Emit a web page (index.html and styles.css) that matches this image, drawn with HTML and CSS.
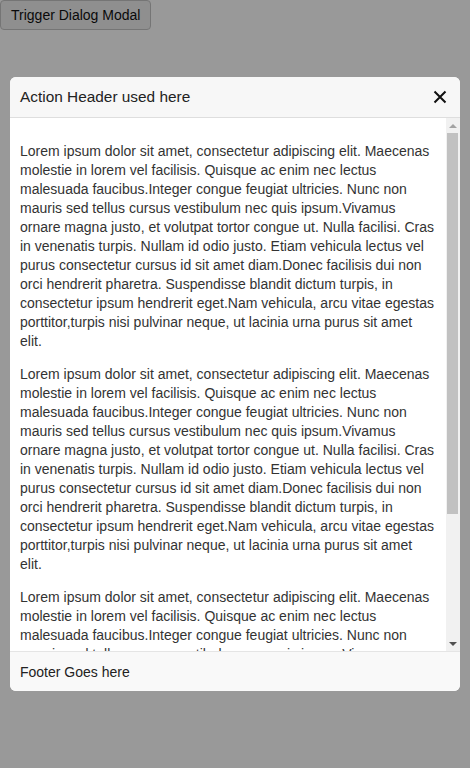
FILE: index.html
```html
<!DOCTYPE html>
<html>
<head>
<meta charset="utf-8">
<link rel="stylesheet" href="styles.css">
</head>
<body>
<button class="trigger">Trigger Dialog Modal</button>
<div class="overlay">
  <div class="modal">
    <div class="modal-header">
      <span class="title">Action Header used here</span>
      <button class="close" aria-label="Close">
        <svg width="14" height="14" viewBox="0 0 14 14"><path d="M1.5 1.5 L12.5 12.5 M12.5 1.5 L1.5 12.5" stroke="#111" stroke-width="2" fill="none"/></svg>
      </button>
    </div>
    <div class="modal-body">
      <div class="content">
        <p>Lorem ipsum dolor sit amet, consectetur adipiscing elit. Maecenas molestie in lorem vel facilisis. Quisque ac enim nec lectus malesuada faucibus.Integer congue feugiat ultricies. Nunc non mauris sed tellus cursus vestibulum nec quis ipsum.Vivamus ornare magna justo, et volutpat tortor congue ut. Nulla facilisi. Cras in venenatis turpis. Nullam id odio justo. Etiam vehicula lectus vel purus consectetur cursus id sit amet diam.Donec facilisis dui non orci hendrerit pharetra. Suspendisse blandit dictum turpis, in consectetur ipsum hendrerit eget.Nam vehicula, arcu vitae egestas porttitor,turpis nisi pulvinar neque, ut lacinia urna purus sit amet elit.</p>
        <p>Lorem ipsum dolor sit amet, consectetur adipiscing elit. Maecenas molestie in lorem vel facilisis. Quisque ac enim nec lectus malesuada faucibus.Integer congue feugiat ultricies. Nunc non mauris sed tellus cursus vestibulum nec quis ipsum.Vivamus ornare magna justo, et volutpat tortor congue ut. Nulla facilisi. Cras in venenatis turpis. Nullam id odio justo. Etiam vehicula lectus vel purus consectetur cursus id sit amet diam.Donec facilisis dui non orci hendrerit pharetra. Suspendisse blandit dictum turpis, in consectetur ipsum hendrerit eget.Nam vehicula, arcu vitae egestas porttitor,turpis nisi pulvinar neque, ut lacinia urna purus sit amet elit.</p>
        <p>Lorem ipsum dolor sit amet, consectetur adipiscing elit. Maecenas molestie in lorem vel facilisis. Quisque ac enim nec lectus malesuada faucibus.Integer congue feugiat ultricies. Nunc non mauris sed tellus cursus vestibulum nec quis ipsum.Vivamus ornare magna justo, et volutpat tortor congue ut. Nulla facilisi. Cras in venenatis turpis. Nullam id odio justo. Etiam vehicula lectus vel purus consectetur cursus id sit amet diam.Donec facilisis dui non orci hendrerit pharetra. Suspendisse blandit dictum turpis, in consectetur ipsum hendrerit eget.Nam vehicula, arcu vitae egestas porttitor,turpis nisi pulvinar neque, ut lacinia urna purus sit amet elit.</p>
      </div>
      <div class="scrollbar" aria-hidden="true">
        <div class="sb-btn"><span class="arrow-up"></span></div>
        <div class="sb-track"><div class="sb-thumb"></div></div>
        <div class="sb-btn"><span class="arrow-down"></span></div>
      </div>
    </div>
    <div class="modal-footer">Footer Goes here</div>
  </div>
</div>
</body>
</html>
```
FILE: styles.css
```css
html, body {
  margin: 0;
  padding: 0;
  background: #fff;
  font-family: "Liberation Sans", Arial, sans-serif;
}
.trigger {
  font-family: "Liberation Sans", Arial, sans-serif;
  font-size: 14px;
  color: #111;
  background: #efefef;
  border: 1px solid #c4c4c4;
  border-radius: 4px;
  padding: 6px 10px;
  margin: 0;
  height: 30px;
}
.overlay {
  position: fixed;
  inset: 0;
  background: rgba(0,0,0,0.4);
  display: flex;
  flex-direction: column;
  padding: 77px 10px 0;
}
.modal {
  background: #fff;
  border-radius: 6px;
  height: 614px;
  display: flex;
  flex-direction: column;
  overflow: hidden;
  color: #333;
}
.modal-header {
  flex: none;
  height: 41px;
  box-sizing: border-box;
  display: flex;
  align-items: center;
  justify-content: space-between;
  padding: 0 10px;
  background: #f7f7f7;
  border-bottom: 1px solid #dedede;
  font-size: 15.4px;
  color: #222;
}
.close {
  border: 0;
  background: none;
  padding: 0;
  width: 14px;
  height: 14px;
  display: flex;
  margin-right: 3px;
}
.modal-body {
  flex: 1;
  min-height: 0;
  display: flex;
}
.content {
  flex: 1;
  min-width: 0;
  overflow: hidden;
  padding: 10px;
  font-size: 14px;
  line-height: 19px;
  color: #333;
}
.content p {
  margin: 14px 0;
}
.scrollbar {
  flex: none;
  width: 14px;
  background: #f1f1f1;
  display: flex;
  flex-direction: column;
}
.sb-btn {
  flex: none;
  height: 15px;
  display: flex;
  align-items: center;
  justify-content: center;
}
.arrow-up {
  width: 0;
  height: 0;
  border-left: 4px solid transparent;
  border-right: 4px solid transparent;
  border-bottom: 4px solid #a3a3a3;
}
.arrow-down {
  width: 0;
  height: 0;
  border-left: 4px solid transparent;
  border-right: 4px solid transparent;
  border-top: 4px solid #505050;
}
.sb-track {
  flex: 1;
  padding: 0 2px 0 1px;
}
.sb-thumb {
  height: 381px;
  background: #c1c1c1;
}
.modal-footer {
  flex: none;
  height: 40px;
  box-sizing: border-box;
  display: flex;
  align-items: center;
  padding: 0 10px;
  background: #f9f9f9;
  border-top: 1px solid #e5e5e5;
  font-size: 14px;
  color: #222;
}
```
